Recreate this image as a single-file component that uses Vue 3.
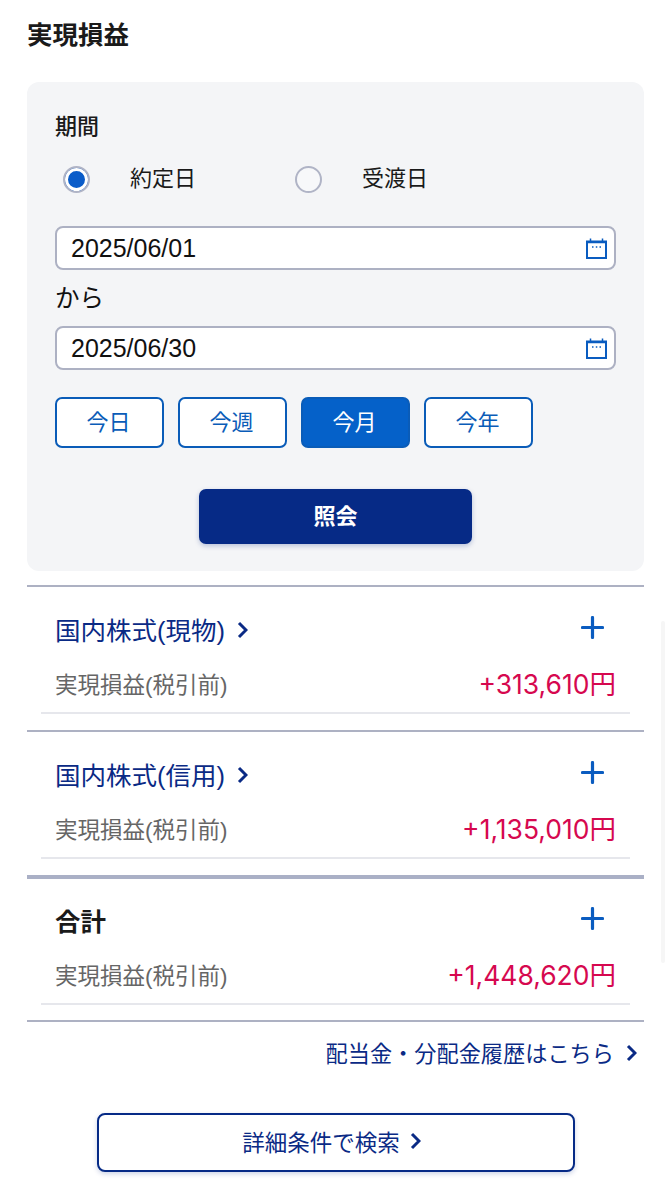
<script setup>
const dates = [
  { value: '2025/06/01', after: 'から' },
  { value: '2025/06/30' }
]
const ranges = [
  { label: '今日' },
  { label: '今週' },
  { label: '今月', active: true },
  { label: '今年' }
]
const rows = [
  { title: '国内株式(現物)', amount: '+313,610円', link: true },
  { title: '国内株式(信用)', amount: '+1,135,010円', link: true },
  { title: '合計', amount: '+1,448,620円', thick: true }
]
</script>

<template>
  <div class="page">
    <h1 class="title">実現損益</h1>

    <section class="panel">
      <div class="label">期間</div>
      <div class="radios">
        <div class="radio-item">
          <span class="radio on"></span>
          <span class="radio-text">約定日</span>
        </div>
        <div class="radio-item">
          <span class="radio"></span>
          <span class="radio-text">受渡日</span>
        </div>
      </div>

      <div class="dates">
        <template v-for="d in dates" :key="d.value">
          <div class="date-input">
            <span>{{ d.value }}</span>
            <svg class="cal" width="21" height="21" viewBox="0 0 21 21" fill="none">
              <path d="M1 3.500h19v16.500h-19z" stroke="#0a5cc0" stroke-width="2" />
              <path d="M1 4.500h19" stroke="#0a5cc0" stroke-width="1.500" />
              <path d="M4.500 0.500v3M16.500 0.500v3" stroke="#0a5cc0" stroke-width="1.500" />
              <path d="M6 9h1.500M9.800 9h1.500M13.500 9h1.500" stroke="#0a5cc0" stroke-width="1.500" />
            </svg>
          </div>
          <div v-if="d.after" class="after">{{ d.after }}</div>
        </template>
      </div>

      <div class="ranges">
        <button v-for="r in ranges" :key="r.label" class="range" :class="{ active: r.active }">{{ r.label }}</button>
      </div>

      <button class="submit">照会</button>
    </section>

    <section v-for="row in rows" :key="row.title" class="row" :class="{ thick: row.thick }">
      <div class="row-head">
        <div class="row-title" :class="{ link: row.link }">
          {{ row.title }}
          <svg v-if="row.link" width="11" height="18" viewBox="0 0 11 18" fill="none">
            <path d="M2 2l7 7-7 7" stroke="currentColor" stroke-width="3" />
          </svg>
        </div>
        <svg class="plus" width="23" height="23" viewBox="0 0 23 23" fill="none">
          <path d="M11.500 1.500v20M1.500 11.500h20" stroke="#0a5cc0" stroke-width="3.200" stroke-linecap="round" />
        </svg>
      </div>
      <div class="row-body">
        <span class="row-label">実現損益(税引前)</span>
        <span class="row-amount">{{ row.amount }}</span>
      </div>
    </section>

    <div class="rule"></div>

    <a class="history">
      配当金・分配金履歴はこちら
      <svg width="11" height="18" viewBox="0 0 11 18" fill="none">
        <path d="M2 2l7 7-7 7" stroke="currentColor" stroke-width="3" />
      </svg>
    </a>

    <button class="detail">
      詳細条件で検索
      <svg width="11" height="18" viewBox="0 0 11 18" fill="none">
        <path d="M2 2l7 7-7 7" stroke="currentColor" stroke-width="3" />
      </svg>
    </button>

    <div class="scrollbar"></div>
  </div>
</template>

<style scoped>
.page {
  position: relative;
  width: 671px;
  height: 1200px;
  overflow: hidden;
  box-sizing: border-box;
  padding: 0 27px;
  background: #fff;
  color: #1a1a1a;
  font-family: "Liberation Sans", "Noto Sans CJK JP", sans-serif;
}

.title {
  margin: 0;
  padding-top: 20px;
  font-size: 25.500px;
  line-height: 30px;
  font-weight: 700;
}

.panel {
  margin: 32px 0 14px;
  width: 617px;
  height: 489px;
  box-sizing: border-box;
  padding: 32px 28px 0;
  background: #f4f5f7;
  border-radius: 12px;
}

.label {
  font-size: 22px;
  line-height: 26px;
  font-weight: 500;
}

.radios {
  display: flex;
  margin-top: 24px;
  padding-left: 8px;
}

.radio-item {
  display: flex;
  align-items: center;
  width: 232px;
  height: 30px;
  font-size: 22px;
  gap: 40px;
}

.radio-text {
  padding-bottom: 6px;
}

.radio {
  box-sizing: border-box;
  width: 27px;
  height: 27px;
  border: 2px solid #b0b4c6;
  border-radius: 50%;
  background: #f7f8fa;
}

.radio.on {
  background: #0a5cc9;
  box-shadow: inset 0 0 0 3px #fff;
}

.dates {
  margin-top: 32px;
}

.date-input {
  display: flex;
  align-items: center;
  justify-content: space-between;
  box-sizing: border-box;
  width: 561px;
  height: 44px;
  padding: 0 7px 0 14px;
  border: 2px solid #adb1c3;
  border-radius: 8px;
  background: #fff;
  font-size: 25px;
  color: #111;
}

.after {
  height: 56px;
  font-size: 24.500px;
  line-height: 58px;
  color: #111;
}

.ranges {
  display: flex;
  gap: 14px;
  margin-top: 27px;
}

.range {
  box-sizing: border-box;
  width: 109px;
  height: 51px;
  padding: 0 2px 6px 0;
  border: 2px solid #0a5cb8;
  border-radius: 7px;
  background: #fff;
  color: #0a5cb8;
  font-family: inherit;
  font-size: 22px;
}

.range.active {
  background: #0561c9;
  color: #fff;
}

.submit {
  display: block;
  width: 273px;
  height: 55px;
  margin: 41px auto 0;
  padding: 0 0 6px;
  border: 0;
  border-radius: 7px;
  background: #062a86;
  color: #fff;
  font-family: inherit;
  font-size: 22px;
  font-weight: 700;
  box-shadow: 0 2px 5px rgba(6, 42, 134, 0.25);
}

.row {
  height: 145px;
  box-sizing: border-box;
  padding: 0 14px;
  border-top: 2px solid #adb1c3;
}

.row.thick {
  border-top: 4px solid #aab0c6;
}

.row-head {
  display: flex;
  align-items: center;
  justify-content: space-between;
  height: 34px;
  margin-top: 25px;
  padding: 0 26px 0 14px;
}

.thick .row-head {
  margin-top: 24px;
}

.row-title {
  display: flex;
  align-items: center;
  gap: 12px;
  padding-bottom: 2px;
  font-size: 25.500px;
  font-weight: 700;
}

.row-title svg {
  margin-top: 4px;
}

.row-title.link {
  color: #0a2a85;
  font-weight: 400;
}

.plus {
  margin-top: -3px;
}

.row-body {
  display: flex;
  align-items: center;
  justify-content: space-between;
  height: 54px;
  margin-top: 12px;
  padding: 0 14px;
  border-bottom: 2px solid #e6e7ec;
}

.row-label {
  padding-bottom: 4px;
  font-size: 22.500px;
  color: #666;
}

.row-amount {
  padding-bottom: 5px;
  font-family: Inter, "Noto Sans CJK JP", sans-serif;
  font-size: 26.500px;
  color: #d6084f;
}

.rule {
  height: 2px;
  background: #adb1c3;
}

.history {
  display: flex;
  justify-content: flex-end;
  align-items: center;
  gap: 12px;
  margin-top: 15px;
  padding-right: 7px;
  height: 30px;
  font-size: 22.200px;
  color: #0a2a85;
}

.history svg {
  margin-top: 2px;
}

.detail {
  display: flex;
  align-items: center;
  justify-content: center;
  gap: 10px;
  width: 478px;
  height: 59px;
  margin: 46px auto 0;
  padding: 0 8px 3px 0;
  border: 2px solid #062a86;
  border-radius: 8px;
  background: #fff;
  color: #0a2a85;
  font-family: inherit;
  font-size: 22.500px;
  box-shadow: 0 2px 5px rgba(6, 42, 134, 0.2);
}

.scrollbar {
  position: absolute;
  left: 661px;
  top: 621px;
  width: 4px;
  height: 342px;
  border-radius: 2px;
  background: #f6f6f6;
}
</style>
